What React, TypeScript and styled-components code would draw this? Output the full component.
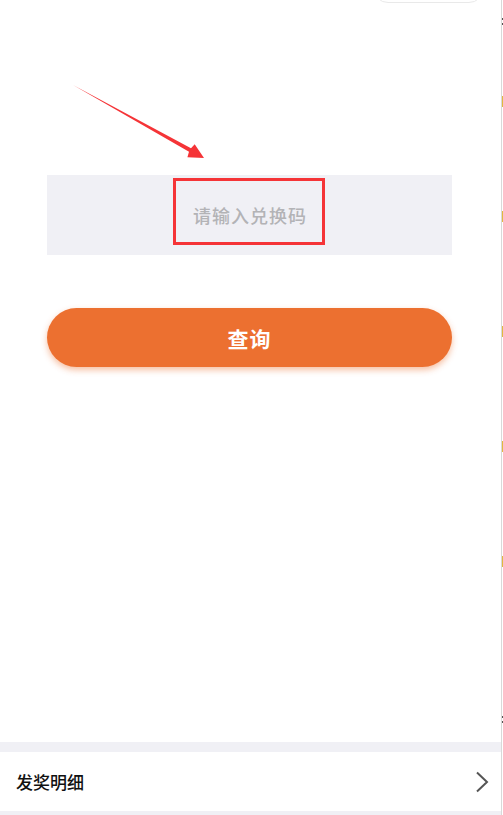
import React from "react";
import styled, { createGlobalStyle } from "styled-components";

const Global = createGlobalStyle`
  html, body { margin: 0; padding: 0; background: #fff; }
  body { font-family: "Noto Sans CJK SC", "Noto Sans", sans-serif; }
  * { box-sizing: border-box; }
`;

const Shell = styled.div`
  position: relative;
  width: 503px;
  height: 815px;
  display: flex;
  overflow: hidden;
  background: #fff;
`;

const Panel = styled.div`
  position: relative;
  width: 501px;
  display: flex;
  flex-direction: column;
`;

const Divider = styled.div`
  width: 1px;
  background: #d9d9d9;
`;

const Sliver = styled.div`
  flex: 1;
  background:
    linear-gradient(#555, #555) 0 18px / 1px 2px no-repeat,
    linear-gradient(#555, #555) 0 23px / 1px 2px no-repeat,
    linear-gradient(#555, #555) 0 716px / 1px 2px no-repeat,
    linear-gradient(#555, #555) 0 721px / 1px 2px no-repeat,
    repeating-linear-gradient(
      to bottom,
      transparent 0 96px,
      #e0b840 96px 107px,
      transparent 107px 115px
    ) 0 0 / 1px 570px no-repeat,
    #fff;
`;

const TopPill = styled.div`
  position: absolute;
  left: 373px;
  top: -27px;
  width: 111px;
  height: 30px;
  border: 1px solid #e9e9e9;
  border-radius: 15px;
  background: #fff;
`;

const ArrowSvg = styled.svg`
  position: absolute;
  left: 0;
  top: 0;
  pointer-events: none;
`;

const Content = styled.div`
  flex: 1;
  padding: 175px 49px 0 47px;
  display: flex;
  flex-direction: column;
  gap: 53px;
`;

const InputBox = styled.div`
  position: relative;
  height: 80px;
  background: #f0f0f5;
  display: flex;
  align-items: center;
  justify-content: center;
`;

const Placeholder = styled.span`
  font-size: 18px;
  font-weight: 500;
  letter-spacing: 1px;
  color: #b3b3b6;
  margin-left: 1px;
`;

const Highlight = styled.div`
  position: absolute;
  left: 126px;
  top: 3px;
  width: 152px;
  height: 67px;
  border: 3px solid #f53437;
`;

const QueryButton = styled.button`
  height: 59px;
  border: none;
  border-radius: 30px;
  background: #ec7030;
  box-shadow: 0 3px 6px rgba(236, 112, 48, 0.45);
  color: #fff;
  font-family: "Noto Sans CJK SC", sans-serif;
  font-size: 21px;
  font-weight: 700;
  letter-spacing: 1px;
  display: flex;
  align-items: center;
  justify-content: center;
  padding: 0;
`;

const Band = styled.div<{ $h: number }>`
  height: ${(p) => p.$h}px;
  background: #f0f0f5;
`;

const Row = styled.div`
  height: 59px;
  display: flex;
  align-items: center;
  justify-content: space-between;
  padding: 0 12px 0 16px;
  background: #fff;
`;

const RowLabel = styled.span`
  font-size: 17px;
  font-weight: 500;
  color: #111;
`;

export default function App() {
  return (
    <>
      <Global />
      <Shell>
        <Panel>
          <TopPill />
          <ArrowSvg width="501" height="200" viewBox="0 0 501 200">
            <polygon
              points="73,85 191,148.3 194.7,144.2 204,158 187.4,157.3 189,151.7"
              fill="#f53437"
            />
          </ArrowSvg>
          <Content>
            <InputBox>
              <Placeholder>请输入兑换码</Placeholder>
              <Highlight />
            </InputBox>
            <QueryButton>查询</QueryButton>
          </Content>
          <Band $h={10} />
          <Row>
            <RowLabel>发奖明细</RowLabel>
            <svg width="14" height="22" viewBox="0 0 14 22">
              <polyline
                points="2,1.5 12,11 2,20.5"
                fill="none"
                stroke="#555"
                strokeWidth="2"
              />
            </svg>
          </Row>
          <Band $h={4} />
        </Panel>
        <Divider />
        <Sliver />
      </Shell>
    </>
  );
}
